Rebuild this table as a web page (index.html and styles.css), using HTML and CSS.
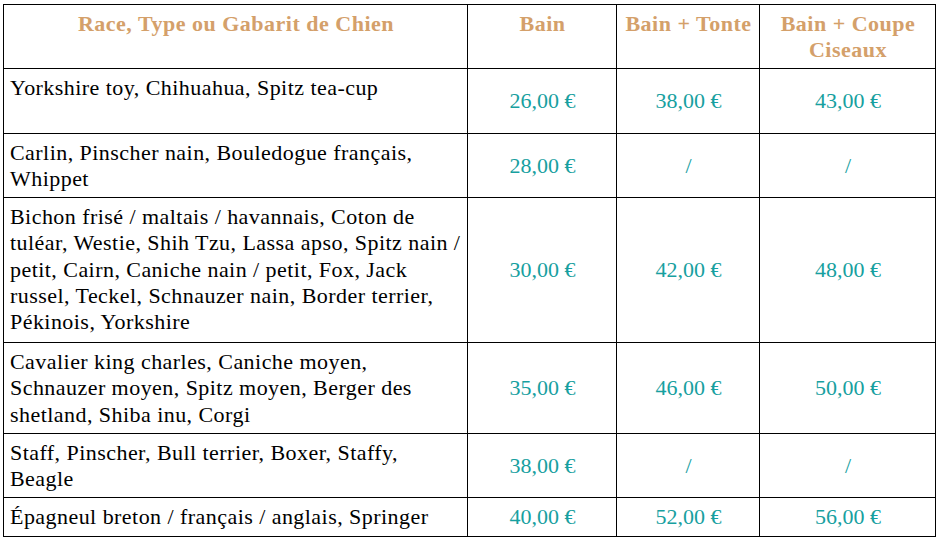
FILE: index.html
```html
<!DOCTYPE html>
<html lang="fr">
<head>
<meta charset="utf-8">
<title>Tarifs toilettage</title>
<link rel="stylesheet" href="styles.css">
</head>
<body>
<table class="tarifs">
  <colgroup>
    <col class="c-race">
    <col class="c-bain">
    <col class="c-tonte">
    <col class="c-coupe">
  </colgroup>
  <thead>
    <tr>
      <th>Race, Type ou Gabarit de Chien</th>
      <th>Bain</th>
      <th>Bain + Tonte</th>
      <th>Bain + Coupe Ciseaux</th>
    </tr>
  </thead>
  <tbody>
    <tr class="r-tall">
      <td class="race">Yorkshire toy, Chihuahua, Spitz tea-cup</td>
      <td class="prix">26,00 €</td>
      <td class="prix">38,00 €</td>
      <td class="prix">43,00 €</td>
    </tr>
    <tr>
      <td class="race">Carlin, Pinscher nain, Bouledogue français, Whippet</td>
      <td class="prix">28,00 €</td>
      <td class="prix">/</td>
      <td class="prix">/</td>
    </tr>
    <tr class="r-long">
      <td class="race">Bichon frisé / maltais / havannais, Coton de tuléar, Westie, Shih Tzu, Lassa apso, Spitz nain / petit, Cairn, Caniche nain / petit, Fox, Jack russel, Teckel, Schnauzer nain, Border terrier, Pékinois, Yorkshire</td>
      <td class="prix">30,00 €</td>
      <td class="prix">42,00 €</td>
      <td class="prix">48,00 €</td>
    </tr>
    <tr>
      <td class="race">Cavalier king charles, Caniche moyen, Schnauzer moyen, Spitz moyen, Berger des shetland, Shiba inu, Corgi</td>
      <td class="prix">35,00 €</td>
      <td class="prix">46,00 €</td>
      <td class="prix">50,00 €</td>
    </tr>
    <tr>
      <td class="race">Staff, Pinscher, Bull terrier, Boxer, Staffy, Beagle</td>
      <td class="prix">38,00 €</td>
      <td class="prix">/</td>
      <td class="prix">/</td>
    </tr>
    <tr>
      <td class="race">Épagneul breton / français / anglais, Springer</td>
      <td class="prix">40,00 €</td>
      <td class="prix">52,00 €</td>
      <td class="prix">56,00 €</td>
    </tr>
  </tbody>
</table>
</body>
</html>
```

FILE: styles.css
```css
html, body {
  margin: 0;
  padding: 0;
  background: #ffffff;
}

body {
  padding: 4px 0 0 3px;
  font-family: "Liberation Serif", "Times New Roman", serif;
  font-size: 22px;
  line-height: 26.25px;
  color: #000000;
}

.tarifs {
  border-collapse: collapse;
  table-layout: fixed;
  width: 932px;
}

.c-race { width: 464px; }
.c-bain { width: 149px; }
.c-tonte { width: 143px; }
.c-coupe { width: 176px; }

.tarifs th,
.tarifs td {
  border: 1px solid #000000;
  padding: 6px 5px 5px 6px;
}

.tarifs th {
  color: #d4a06a;
  font-weight: bold;
  letter-spacing: 0.5px;
  text-align: center;
  vertical-align: top;
  padding-bottom: 4px;
}

.race {
  letter-spacing: 0.45px;
  vertical-align: top;
  text-align: left;
}

.prix {
  color: #17a0a0;
  text-align: center;
  vertical-align: middle;
}

.r-tall td {
  height: 53px;
}

.r-long td {
  height: 133px;
}
```
